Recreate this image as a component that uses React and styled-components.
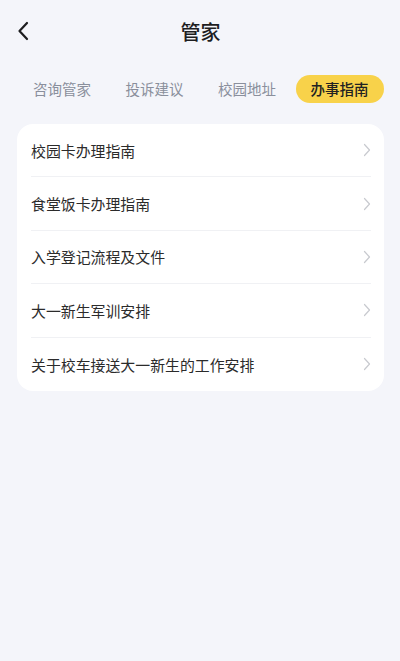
import React from 'react';
import styled, {createGlobalStyle} from 'styled-components';

const Global = createGlobalStyle`
  body {
    margin: 0;
    background: #f4f5fa;
    font-family: "Noto Sans CJK SC", "Noto Sans", sans-serif;
  }
`

const Page = styled.div`
  width: 400px;
  min-height: 661px;
  background: #f4f5fa;
  padding: 0 16px 0 17px;
  box-sizing: border-box;
`

const Header = styled.div`
  height: 62px;
  display: flex;
  align-items: center;
  justify-content: center;
  position: relative;
`

const Back = styled.button`
  position: absolute;
  left: 0;
  top: 19px;
  width: 24px;
  height: 24px;
  padding: 0;
  border: none;
  background: none;
  display: flex;
  align-items: center;
`

const Title = styled.h1`
  margin: 0;
  font-size: 20px;
  font-weight: 500;
  color: #1d1d1f;
`

const Tabs = styled.div`
  display: flex;
  align-items: center;
  gap: 4.5px;
  height: 28px;
  margin-top: 13px;
  padding-left: 1px;
`

const Tab = styled.div`
  height: 28px;
  line-height: 28px;
  padding: 0 15px;
  border-radius: 14px;
  background: ${p => (p.active ? '#f8d24a' : 'transparent')};
  color: ${p => (p.active ? '#222' : '#8a8f9c')};
  font-size: 14.5px;
  font-weight: ${p => (p.active ? 500 : 400)};
`

const Card = styled.div`
  margin-top: 21px;
  background: #fff;
  border-radius: 16px;
  padding: 0 13px 0 14px;
`

const Row = styled.div`
  height: 53.4px;
  display: flex;
  align-items: center;
  justify-content: space-between;
  border-bottom: ${p => (p.last ? 'none' : '1px solid #f0f1f4')};
  box-sizing: border-box;
`

const Label = styled.span`
  font-size: 14.9px;
  color: #2b2b2b;
`

const items = [
  '校园卡办理指南',
  '食堂饭卡办理指南',
  '入学登记流程及文件',
  '大一新生军训安排',
  '关于校车接送大一新生的工作安排',
];

const tabs = ['咨询管家', '投诉建议', '校园地址', '办事指南'];

export default function App() {
  return (
    <>
      <Global />
      <Page>
        <Header>
          <Back>
            <svg width="14" height="20" viewBox="0 0 14 20">
              <path d="M10 2 L2.5 10 L10 18" fill="none" stroke="#1d1d1f" strokeWidth="2.2" strokeLinecap="round" strokeLinejoin="round" />
            </svg>
          </Back>
          <Title>管家</Title>
        </Header>
        <Tabs>
          {tabs.map((t, k) => (
            <Tab key={k} active={k === 3}>{t}</Tab>
          ))}
        </Tabs>
        <Card>
          {items.map((t, k) => (
            <Row key={k} last={k === items.length - 1}>
              <Label>{t}</Label>
              <svg width="8" height="14" viewBox="0 0 8 14">
                <path d="M1.5 1.5 L6.5 7 L1.5 12.5" fill="none" stroke="#c8cacf" strokeWidth="1.2" strokeLinecap="round" strokeLinejoin="round" />
              </svg>
            </Row>
          ))}
        </Card>
      </Page>
    </>
  );
}
